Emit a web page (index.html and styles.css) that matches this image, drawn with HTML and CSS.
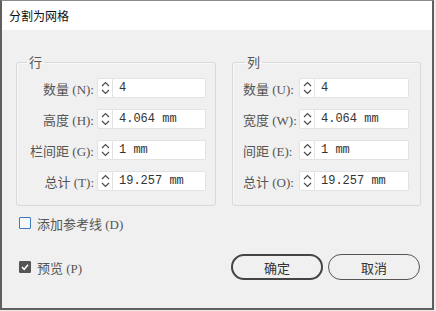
FILE: index.html
```html
<!DOCTYPE html>
<html lang="zh-CN">
<head>
    <meta charset="UTF-8">
    <title>分割为网格</title>
    <link rel="stylesheet" href="styles.css">
</head>
<body>
    <div class="dialog">
        <div class="titlebar">分割为网格</div>

        <div class="content">
            <div class="groups">
                <!-- 行 -->
                <fieldset class="group group-rows">
                    <legend>行</legend>
                    <div class="field-grid">
                        <span class="label">数量 (N):</span>
                        <span class="spinner"><svg width="9" height="16" viewBox="0 0 9 16"><path d="M1 6 L4.5 2.5 L8 6 M1 10 L4.5 13.5 L8 10"/></svg></span>
                        <span class="value">4</span>

                        <span class="label">高度 (H):</span>
                        <span class="spinner"><svg width="9" height="16" viewBox="0 0 9 16"><path d="M1 6 L4.5 2.5 L8 6 M1 10 L4.5 13.5 L8 10"/></svg></span>
                        <span class="value">4.064 mm</span>

                        <span class="label">栏间距 (G):</span>
                        <span class="spinner"><svg width="9" height="16" viewBox="0 0 9 16"><path d="M1 6 L4.5 2.5 L8 6 M1 10 L4.5 13.5 L8 10"/></svg></span>
                        <span class="value">1 mm</span>

                        <span class="label">总计 (T):</span>
                        <span class="spinner"><svg width="9" height="16" viewBox="0 0 9 16"><path d="M1 6 L4.5 2.5 L8 6 M1 10 L4.5 13.5 L8 10"/></svg></span>
                        <span class="value">19.257 mm</span>
                    </div>
                </fieldset>

                <!-- 列 -->
                <fieldset class="group group-cols">
                    <legend>列</legend>
                    <div class="field-grid">
                        <span class="label">数量 (U):</span>
                        <span class="spinner"><svg width="9" height="16" viewBox="0 0 9 16"><path d="M1 6 L4.5 2.5 L8 6 M1 10 L4.5 13.5 L8 10"/></svg></span>
                        <span class="value">4</span>

                        <span class="label">宽度 (W):</span>
                        <span class="spinner"><svg width="9" height="16" viewBox="0 0 9 16"><path d="M1 6 L4.5 2.5 L8 6 M1 10 L4.5 13.5 L8 10"/></svg></span>
                        <span class="value">4.064 mm</span>

                        <span class="label">间距 (E):</span>
                        <span class="spinner"><svg width="9" height="16" viewBox="0 0 9 16"><path d="M1 6 L4.5 2.5 L8 6 M1 10 L4.5 13.5 L8 10"/></svg></span>
                        <span class="value">1 mm</span>

                        <span class="label">总计 (O):</span>
                        <span class="spinner"><svg width="9" height="16" viewBox="0 0 9 16"><path d="M1 6 L4.5 2.5 L8 6 M1 10 L4.5 13.5 L8 10"/></svg></span>
                        <span class="value">19.257 mm</span>
                    </div>
                </fieldset>
            </div>

            <label class="check">
                <span class="box"></span>
                添加参考线 (D)
            </label>

            <div class="footer">
                <label class="check">
                    <span class="box checked"><svg width="10" height="10" viewBox="0 0 10 10"><path d="M2 5.2 L4.2 7.3 L8 2.8"/></svg></span>
                    预览 (P)
                </label>
                <div class="buttons">
                    <button class="btn btn-primary">确定</button>
                    <button class="btn">取消</button>
                </div>
            </div>
        </div>
    </div>
</body>
</html>
```

FILE: styles.css
```css
body {
    margin: 0;
    background-color: #ececec;
    font-family: "Liberation Serif", "Noto Sans CJK SC", serif;
    font-size: 13px;
    color: #555;
}

.dialog {
    width: 434px;
    height: 310px;
    box-sizing: border-box;
    border: 2px solid #5f5f5f;
    border-top: 1px solid #8a8a8a;
    background-color: #f0f0f0;
    display: flex;
    flex-direction: column;
}

.titlebar {
    height: 29px;
    background-color: #fff;
    padding-left: 7px;
    font-family: "Noto Sans CJK SC", sans-serif;
    font-size: 12px;
    line-height: 30px;
    color: #111;
}

.content {
    padding: 25px 11px 0 14px;
}

.groups {
    display: flex;
    gap: 16px;
}

.group {
    margin: 0;
    border: 1px solid #d8d8d8;
    border-radius: 3px;
    box-shadow: inset 1px 1px 0 #fafafa;
    padding: 9px 9px 14px 8px;
    box-sizing: border-box;
}

.group legend {
    margin-left: 2px;
    padding: 0 2px;
    line-height: 14px;
    font-family: "Noto Sans CJK SC", sans-serif;
    font-size: 13px;
    color: #555;
}

.group-rows {
    width: 200px;
}

.group-cols {
    width: 189px;
    padding: 9px 11px 14px 10px;
}

.field-grid {
    display: grid;
    grid-template-columns: 72px 16px 1fr;
    grid-auto-rows: 20px;
    row-gap: 11px;
    align-items: center;
}

.group-cols .field-grid {
    grid-template-columns: 56px 16px 1fr;
}

.label {
    text-align: right;
    padding-right: 3px;
    white-space: nowrap;
    color: #555;
}

.group-cols .label {
    text-align: left;
}

.spinner {
    height: 20px;
    box-sizing: border-box;
    background-color: #fff;
    border: 1px solid #e2e2e2;
    border-radius: 2px 0 0 2px;
    display: flex;
    align-items: center;
    justify-content: center;
}

.spinner path {
    fill: none;
    stroke: #4a4a4a;
    stroke-width: 1.2;
}

.value {
    height: 20px;
    box-sizing: border-box;
    background-color: #fff;
    border: 1px solid #e2e2e2;
    border-left: none;
    border-radius: 0 2px 2px 0;
    padding-left: 6px;
    font-family: "Liberation Mono", monospace;
    font-size: 12px;
    line-height: 18px;
    color: #333;
}

.check {
    display: flex;
    align-items: center;
    gap: 6px;
    margin-top: 10px;
    margin-left: 3px;
    height: 14px;
    color: #555;
}

.box {
    width: 12px;
    height: 12px;
    box-sizing: border-box;
    border: 1px solid #3d7ab8;
    background-color: #f4f8fc;
    border-radius: 1px;
    display: flex;
    align-items: center;
    justify-content: center;
}

.box.checked {
    border-color: #555;
    background-color: #555;
}

.box.checked path {
    fill: none;
    stroke: #fff;
    stroke-width: 1.6;
}

.footer {
    display: flex;
    align-items: center;
    justify-content: space-between;
    margin-top: 24px;
}

.footer .check {
    margin-top: 0;
}

.buttons {
    display: flex;
    gap: 5px;
    margin-right: 1px;
}

.btn {
    width: 92px;
    height: 26px;
    box-sizing: border-box;
    border: 1.5px solid #555;
    border-radius: 13px;
    background-color: #f0f0f0;
    font-family: "Noto Sans CJK SC", sans-serif;
    font-size: 13px;
    color: #333;
    padding: 0;
}

.btn-primary {
    border: 2.5px solid #444;
}
```
